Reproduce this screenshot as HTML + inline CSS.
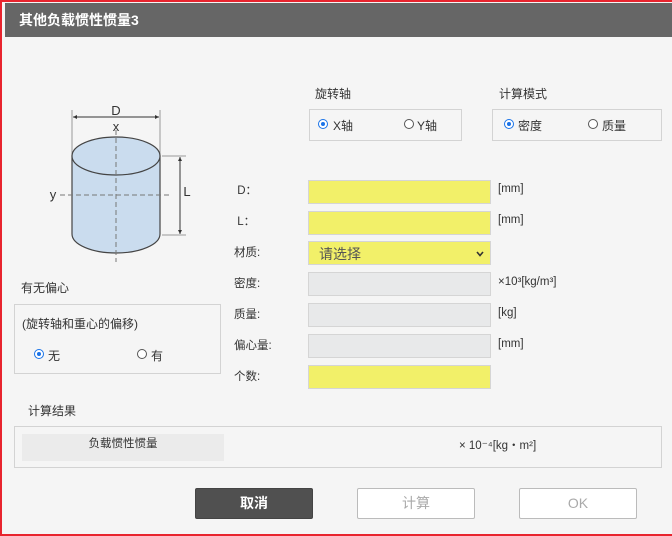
<!DOCTYPE html>
<html><head><meta charset="utf-8"><style>
*{margin:0;padding:0;box-sizing:border-box}
body{width:672px;height:536px;background:#f5f5f5;font-family:"Liberation Sans","Noto Sans CJK SC",sans-serif;font-size:12px;color:#333;position:relative;overflow:hidden}
.a{position:absolute}
.frame{left:0;top:0;width:672px;height:536px;border:2px solid #e8242e;border-right:none}
.title{left:5px;top:3px;width:667px;height:34px;background:#666;color:#fff;font-weight:bold;font-size:14px;line-height:34px;padding-left:14px}
.box{border:1px solid #d3d3d3;background:#f5f5f5}
.in{left:308px;width:183px;height:24px;border:1px solid #d5d5d5}
.y{background:#f2f069}.g{background:#e8e9ea}
.lb{left:234px;font-size:11.5px}
.u{left:498px;font-size:11.5px}
.r{width:10px;height:10px;border:1px solid #555;border-radius:50%;background:#fff}
.r.on{border-color:#1a73e8}
.r.on:after{content:"";position:absolute;left:2px;top:2px;width:4px;height:4px;border-radius:50%;background:#1a73e8}
.btn{top:488px;width:118px;height:31px;border:1px solid #bbb;background:#fff;color:#aaa;font-size:14px;text-align:center;line-height:29px;border-radius:2px}
</style></head><body>
<div class="a frame"></div>
<div class="a title">其他负载惯性惯量3</div>

<svg class="a" style="left:0;top:0" width="300" height="270">
<line x1="72" y1="110" x2="72" y2="156" stroke="#999"/>
<line x1="160" y1="110" x2="160" y2="156" stroke="#999"/>
<line x1="73" y1="117" x2="159" y2="117" stroke="#333"/>
<polygon points="73,117 77,115 77,119" fill="#333"/><polygon points="159,117 155,115 155,119" fill="#333"/>
<path d="M72 156 L72 234 A44 19 0 0 0 160 234 L160 156 Z" fill="#cadcee" stroke="#444" stroke-width="1.2"/>
<ellipse cx="116" cy="156" rx="44" ry="19" fill="#cadcee" stroke="#444" stroke-width="1.2"/>
<line x1="116" y1="130" x2="116" y2="262" stroke="#777" stroke-dasharray="5,3"/>
<line x1="60" y1="195" x2="172" y2="195" stroke="#777" stroke-dasharray="5,3"/>
<line x1="162" y1="156" x2="186" y2="156" stroke="#999"/>
<line x1="162" y1="235" x2="186" y2="235" stroke="#999"/>
<line x1="180" y1="157" x2="180" y2="234" stroke="#333"/>
<polygon points="180,157 178,161 182,161" fill="#333"/><polygon points="180,234 178,230 182,230" fill="#333"/>
<text x="116" y="115" text-anchor="middle" font-size="13" font-family="Liberation Sans" fill="#333">D</text>
<text x="116" y="131" text-anchor="middle" font-size="13" font-family="Liberation Sans" fill="#333">x</text>
<text x="53" y="199" text-anchor="middle" font-size="13" font-family="Liberation Sans" fill="#333">y</text>
<text x="187" y="196" text-anchor="middle" font-size="13" font-family="Liberation Sans" fill="#333">L</text>
</svg>

<div class="a" style="left:315px;top:85px">旋转轴</div>
<div class="a box" style="left:309px;top:109px;width:153px;height:32px"></div>
<div class="a r on" style="left:318px;top:119px"></div><div class="a" style="left:333px;top:117px">X轴</div>
<div class="a r" style="left:404px;top:119px"></div><div class="a" style="left:417px;top:117px">Y轴</div>

<div class="a" style="left:499px;top:85px">计算模式</div>
<div class="a box" style="left:492px;top:109px;width:170px;height:32px"></div>
<div class="a r on" style="left:504px;top:119px"></div><div class="a" style="left:518px;top:117px">密度</div>
<div class="a r" style="left:588px;top:119px"></div><div class="a" style="left:602px;top:117px">质量</div>

<div class="a lb" style="top:182px">&nbsp;D：</div><div class="a in y" style="top:180px"></div><div class="a u" style="top:183px">[mm]</div>
<div class="a lb" style="top:213px">&nbsp;L：</div><div class="a in y" style="top:211px"></div><div class="a u" style="top:214px">[mm]</div>
<div class="a lb" style="top:244px">材质:</div><div class="a in y" style="top:241px;font-size:14px;color:#555;padding:2px 10px">请选择<svg style="position:absolute;right:6px;top:9px" width="8" height="6"><path d="M1 1 L4 4.5 L7 1" fill="none" stroke="#333" stroke-width="1.6"/></svg></div>
<div class="a lb" style="top:275px">密度:</div><div class="a in g" style="top:272px"></div><div class="a u" style="top:276px">×10³[kg/m³]</div>
<div class="a lb" style="top:306px">质量:</div><div class="a in g" style="top:303px"></div><div class="a u" style="top:307px">[kg]</div>
<div class="a lb" style="top:337px">偏心量:</div><div class="a in g" style="top:334px"></div><div class="a u" style="top:338px">[mm]</div>
<div class="a lb" style="top:368px">个数:</div><div class="a in y" style="top:365px"></div>

<div class="a" style="left:21px;top:279px">有无偏心</div>
<div class="a box" style="left:14px;top:304px;width:207px;height:70px"></div>
<div class="a" style="left:22px;top:315px">(旋转轴和重心的偏移)</div>
<div class="a r on" style="left:34px;top:349px"></div><div class="a" style="left:48px;top:347px">无</div>
<div class="a r" style="left:137px;top:349px"></div><div class="a" style="left:151px;top:347px">有</div>

<div class="a" style="left:28px;top:402px">计算结果</div>
<div class="a box" style="left:14px;top:426px;width:648px;height:42px"></div>
<div class="a" style="left:22px;top:434px;width:202px;height:27px;background:#ebebeb;text-align:center;line-height:20px;font-size:11.5px">负载惯性惯量</div>
<div class="a" style="left:459px;top:437px;font-size:11.5px">× 10⁻⁴[kg・m²]</div>

<div class="a btn" style="left:195px;background:#505050;border-color:#444;color:#fff;font-weight:bold">取消</div>
<div class="a btn" style="left:357px">计算</div>
<div class="a btn" style="left:519px">OK</div>
</body></html>
